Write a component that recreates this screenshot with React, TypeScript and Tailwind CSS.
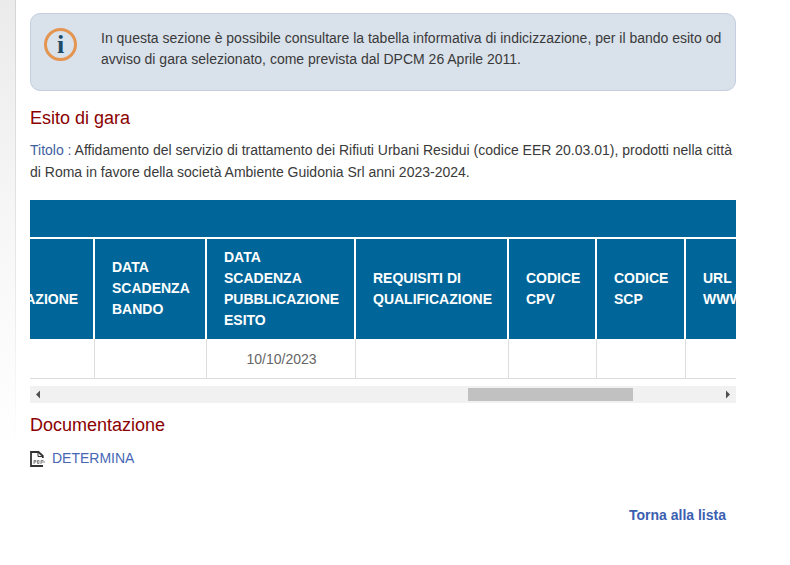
export default function App() {
  const thead = "bg-[#006699] border-l-2 border-white text-left align-middle px-[17px] font-bold text-[14px] leading-[21px] text-white";
  const td = "h-[39px] pt-[3px] border-l border-[#dddddd] border-b text-center text-[14px] text-[#666666]";
  return (
    <div className="flex w-[790px] h-[565px] bg-white overflow-hidden font-['Liberation_Sans',Arial,sans-serif] text-[#3a3a3a]">
      <div className="w-[15px] h-full bg-gradient-to-b from-[#ebebeb] via-[#f7f7f7] via-40% to-white to-80%" />
      <div className="w-[1px] h-full bg-gradient-to-b from-[#d4d4d4] via-[#e8e8e8] via-50% to-white to-80%" />
      <main className="w-[706px] ml-[14px] pt-[13px] shrink-0">
        <div className="flex h-[78px] rounded-[10px] border border-[#c3cede] bg-[#d9e1ea] pl-[13px] pt-[14px]">
          <div className="w-[33px] h-[33px] rounded-full border-[3px] border-[#e39551] flex items-center justify-center font-['Liberation_Serif',serif] font-bold text-[26px] leading-none text-[#1d4b66] shrink-0">i</div>
          <p className="ml-[24px] text-[14px] leading-[21px] text-[#3a3a3a] whitespace-nowrap">
            In questa sezione è possibile consultare la tabella informativa di indicizzazione, per il bando esito od<br />
            avviso di gara selezionato, come prevista dal DPCM 26 Aprile 2011.
          </p>
        </div>
        <h2 className="mt-[15px] text-[18px] leading-[24px] text-[#8b0000]">Esito di gara</h2>
        <p className="mt-[9px] text-[14px] leading-[22px] whitespace-nowrap">
          <span className="text-[#3d5f9e]">Titolo :</span> Affidamento del servizio di trattamento dei Rifiuti Urbani Residui (codice EER 20.03.01), prodotti nella città<br />
          di Roma in favore della società Ambiente Guidonia Srl anni 2023-2024.
        </p>
        <div className="mt-[17px] overflow-hidden w-[706px]">
          <table className="table-fixed border-collapse ml-[-86px] w-[919px]">
            <colgroup>
              <col className="w-[149px]" /><col className="w-[112px]" /><col className="w-[149px]" /><col className="w-[153px]" /><col className="w-[88px]" /><col className="w-[89px]" /><col className="w-[179px]" />
            </colgroup>
            <thead>
              <tr><th colSpan={7} className="h-[38px] bg-[#006699] border-b-2 border-white" /></tr>
              <tr className="h-[101px]">
                <th className={thead}>DATA<br />PUBBLICAZIONE</th>
                <th className={`${thead} pb-[2px]`}>DATA<br />SCADENZA<br />BANDO</th>
                <th className={thead}>DATA<br />SCADENZA<br />PUBBLICAZIONE<br />ESITO</th>
                <th className={thead}>REQUISITI DI<br />QUALIFICAZIONE</th>
                <th className={thead}>CODICE<br />CPV</th>
                <th className={thead}>CODICE<br />SCP</th>
                <th className={thead}>URL<br />WWW</th>
              </tr>
            </thead>
            <tbody>
              <tr>
                <td className={td} /><td className={td} />
                <td className={td}><span className="pl-[2px]">10/10/2023</span></td>
                <td className={td} /><td className={td} /><td className={td} /><td className={td} />
              </tr>
            </tbody>
          </table>
        </div>
        <div className="mt-[7px] flex items-center h-[17px] bg-[#f1f1f1]">
          <svg width="17" height="17" viewBox="0 0 17 17" className="shrink-0"><path d="M10 4.5v8l-4-4z" fill="#505050" /></svg>
          <div className="ml-[421px] w-[165px] h-[13px] bg-[#c1c1c1]" />
          <svg width="17" height="17" viewBox="0 0 17 17" className="ml-auto shrink-0"><path d="M7 4.5v8l4-4z" fill="#505050" /></svg>
        </div>
        <h2 className="mt-[10px] text-[18px] leading-[24px] text-[#8b0000]">Documentazione</h2>
        <div className="mt-[11px] flex items-center gap-[7px] h-[22px]">
          <svg width="15" height="16" viewBox="0 0 15 16" fill="none" className="shrink-0">
            <path d="M12.8 7V5L8.5 1H1v14h12" stroke="#333333" strokeWidth="1.8" />
            <path d="M8 1v4.5h4.5" stroke="#333333" strokeWidth="1" />
            <path d="M4 13V9.5h2V11H4M7.5 9.5V12.5H9V9.5H7.5M11 13V9.5h2.5M11 11h4" stroke="#777777" strokeWidth="0.9" />
          </svg>
          <a className="text-[14px] text-[#4767b5]">DETERMINA</a>
        </div>
        <div className="mt-[34px] flex justify-end pr-[10px]">
          <a className="text-[14px] leading-[22px] font-bold text-[#3a5eb0]">Torna alla lista</a>
        </div>
      </main>
    </div>
  );
}
